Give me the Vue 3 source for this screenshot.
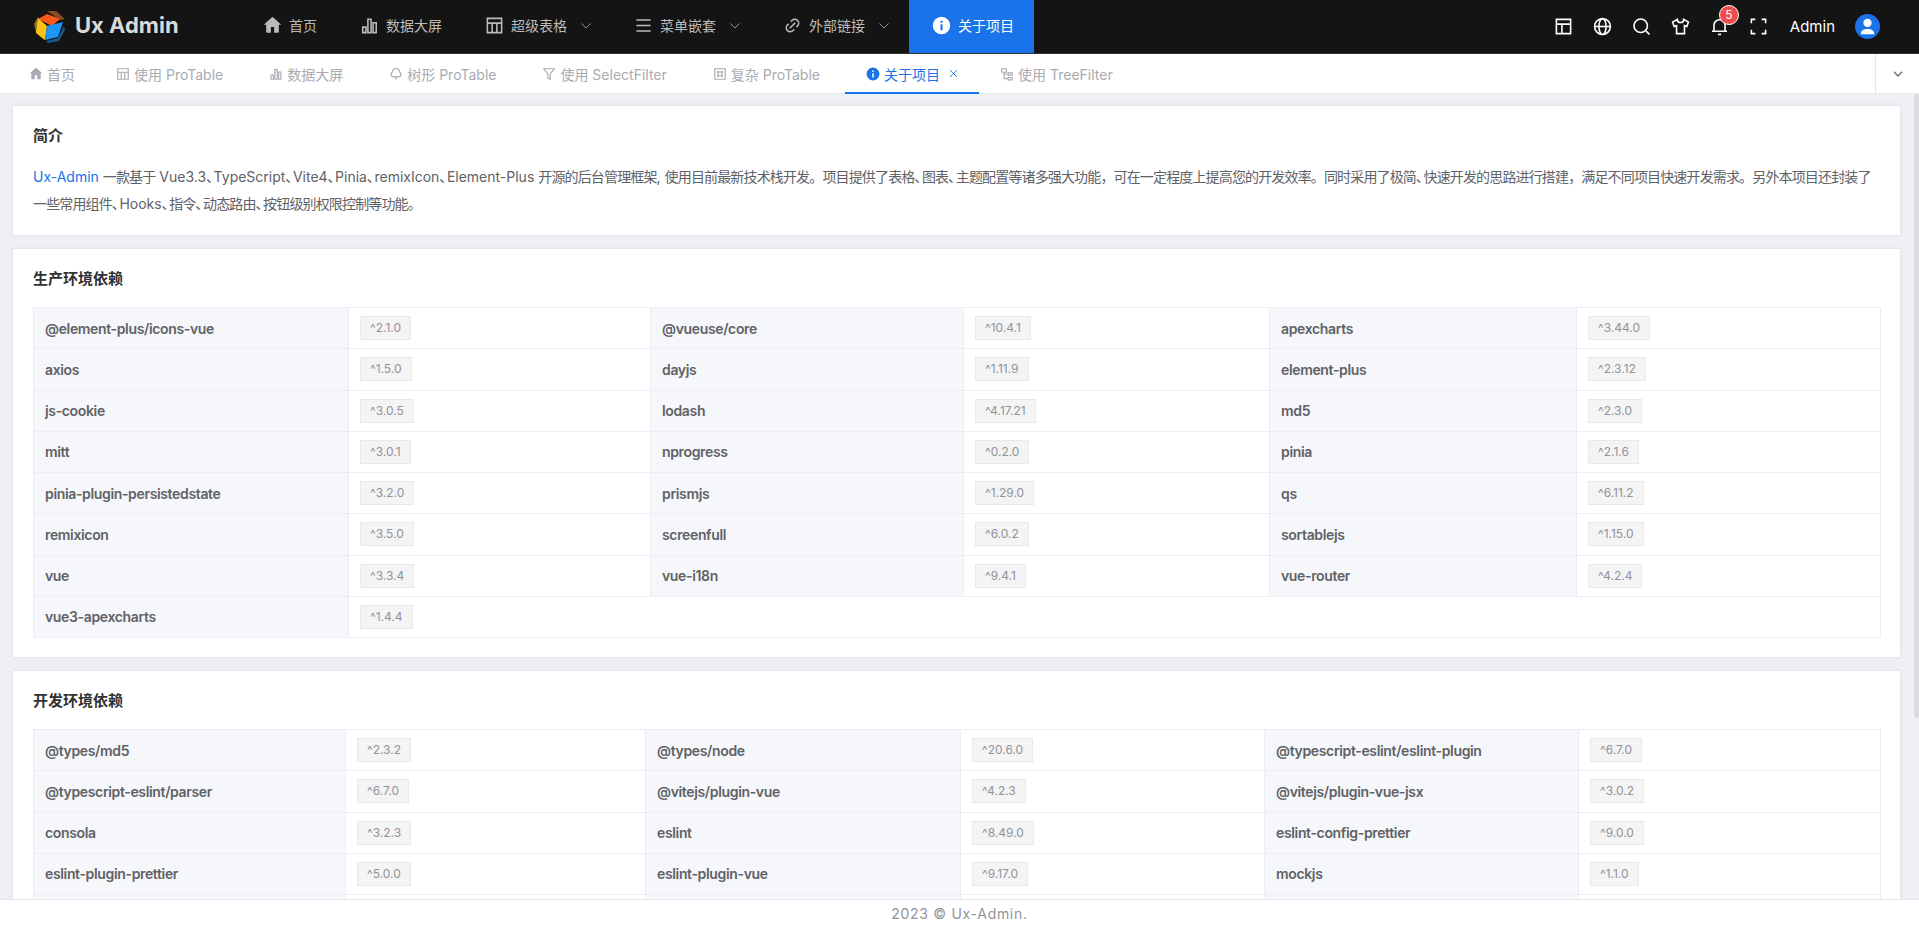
<template>
  <div class="layout">
    <header class="header">
      <div class="logo">
        <svg class="logo-img" viewBox="0 0 32 32">
          <polygon points="14,0 23,0 32,8 27,9" fill="#8a4c22" />
          <polygon points="1,13 5,6 11,29 3,21" fill="#8c7726" />
          <polygon points="13,30 25,27 31,15 32,19 26,30 15,32" fill="#16598f" />
          <polygon points="14,3 27,8 19,15 5,8" fill="#fb5a1c" />
          <polygon points="5,7 14,15 12,29 3,22" fill="#fdc414" />
          <polygon points="14,15 30,11 25,26 12,29" fill="#1b95f6" />
        </svg>
        <span class="logo-text">Ux Admin</span>
      </div>
      <nav class="menu">
        <div v-for="item in menu" :key="item.title" :class="['menu-item', item.active ? 'active' : '']">
          <span class="menu-icon"><svg class="ico" viewBox="0 0 24 24" v-html="icons[item.icon]"></svg></span>
          <span>{{ item.title }}</span>
          <svg v-if="item.sub" class="arrow" viewBox="0 0 10 6"><path d="M.5.5 5 5 9.5.5" fill="none" stroke="currentColor" /></svg>
        </div>
      </nav>
      <div class="tools">
        <span v-for="name in tools" :key="name" class="tool">
          <svg class="ico" viewBox="0 0 24 24" v-html="icons[name]"></svg>
          <b v-if="name === 'bell'" class="badge">5</b>
        </span>
        <span class="username">Admin</span>
        <span class="avatar">
          <svg viewBox="0 0 24 24" fill="#fff"><circle cx="12" cy="8.500" r="4" /><path d="M5.500 19.500c0-3.400 2.500-5 6.500-5s6.500 1.600 6.500 5z" /></svg>
        </span>
      </div>
    </header>

    <div class="tabs">
      <div class="tab-list">
        <div v-for="tab in tabs" :key="tab.title" :class="['tab', tab.active ? 'active' : '', tab.cls]">
          <svg class="tab-icon" viewBox="0 0 24 24" v-html="icons[tab.icon]"></svg>
          <span>{{ tab.title }}</span>
          <svg v-if="tab.active" class="tab-close" viewBox="0 0 10 10"><path d="m1 1 8 8M9 1 1 9" fill="none" stroke="currentColor" /></svg>
        </div>
      </div>
      <div class="tab-more">
        <svg viewBox="0 0 10 6"><path d="M1 .8 5 5 9 .8" fill="none" stroke="#5f6c7b" stroke-width="1.300" /></svg>
      </div>
    </div>

    <div class="body">
      <main class="main">
        <section class="card intro-card">
          <h3 class="card-title">简介</h3>
          <p class="intro"><a class="link">Ux-Admin</a><span v-for="(part, i) in introParts" :key="i" :class="part.cls">{{ part.text }}</span></p>
        </section>

        <section v-for="block in blocks" :key="block.title" class="card">
          <h3 class="card-title">{{ block.title }}</h3>
          <table class="deps">
            <colgroup>
              <col v-for="(w, i) in block.cols" :key="i" :style="{ width: w + 'px' }" />
            </colgroup>
            <tbody>
              <tr v-for="(row, r) in rowsOf(block.items)" :key="r">
                <template v-for="(dep, c) in row" :key="dep[0]">
                  <td class="name">{{ dep[0] }}</td>
                  <td class="ver" :colspan="c === row.length - 1 ? 7 - row.length * 2 : 1"><span class="tag">{{ dep[1] }}</span></td>
                </template>
              </tr>
            </tbody>
          </table>
        </section>
      </main>
      <div class="scrollbar"><div class="thumb"></div></div>
    </div>

    <footer class="footer">2023 © Ux-Admin.</footer>
  </div>
</template>

<script setup>
const line = 'fill="none" stroke="currentColor" stroke-width="2"';

const icons = {
  home: '<path fill-rule="evenodd" d="M20 20a1 1 0 0 1-1 1H5a1 1 0 0 1-1-1v-9H1l10.300-9.400a1 1 0 0 1 1.400 0L23 11h-3zM10 14v7h4v-7z"/>',
  chart: `<path ${line} d="M3.500 14h4v7h-4zM10 4h4v17h-4zM16.500 8.500h4V21h-4z"/>`,
  table: `<path ${line} d="M3 3h18v18H3zM3 9h18M9 9v12M15 9v12"/>`,
  menu: '<path d="M3 4h18v2H3zM3 11h18v2H3zM3 18h18v2H3z"/>',
  link: '<path d="M17.657 14.828l-1.414-1.414L17.657 12A4 4 0 1 0 12 6.343l-1.414 1.414-1.414-1.414 1.414-1.414a6 6 0 0 1 8.485 8.485l-1.414 1.414zm-2.829 2.829l-1.414 1.414a6 6 0 1 1-8.485-8.485l1.414-1.414 1.414 1.414L6.343 12A4 4 0 1 0 12 17.657l1.414-1.414 1.414 1.414zm0-9.900l1.415 1.415-7.071 7.070-1.415-1.414 7.071-7.070z"/>',
  info: '<path fill-rule="evenodd" d="M12 1a11 11 0 1 1 0 22 11 11 0 0 1 0-22zm-1.300 5v2.600h2.600V6zm0 4.500V18h2.600v-7.500z"/>',
  layout: `<path ${line} d="M3 3h18v18H3zM3 9h18M10 9v12"/>`,
  globe: `<g ${line}><circle cx="12" cy="12" r="10"/><ellipse cx="12" cy="12" rx="4.500" ry="10"/><path d="M2 12h20"/></g>`,
  search: `<g ${line}><circle cx="11" cy="11" r="8.500"/><path d="m17.500 17.500 4.500 4.500"/></g>`,
  shirt: `<path ${line} d="M8 3 2 6.500 4 12l3-1v10h10V11l3 1 2-5.500L16 3a4 4 0 0 1-8 0z"/>`,
  bell: `<path ${line} d="M5 18v-7.500a7 7 0 0 1 14 0V18M2.500 18h19"/><path d="M10 21h4v2h-4z"/>`,
  screen: `<path ${line} d="M8 3H3v5M16 3h5v5M8 21H3v-5M16 21h5v-5"/>`,
  tree: `<path ${line} d="M12 2.500a6 6 0 0 0-6 6c-2 1-2.500 2.500-2.500 3.500a5 5 0 0 0 5 5h7a5 5 0 0 0 5-5c0-1-.5-2.500-2.500-3.500a6 6 0 0 0-6-6zM12 17v5"/>`,
  filter: `<path ${line} d="M3 3h18l-7 9v9l-4-2v-7z"/>`,
  complex: `<path ${line} d="M3 3h18v18H3z"/><path d="M7 7h4v4H7zM13 7h4v4h-4zM7 13h4v4H7zM13 13h4v4h-4z"/>`,
  org: `<path ${line} d="M3 3h8v6H3zM14 10h7v4h-7zM14 18h7v4h-7zM7 9v11h7M7 12h7"/>`
};

const menu = [
  { title: '首页', icon: 'home' },
  { title: '数据大屏', icon: 'chart' },
  { title: '超级表格', icon: 'table', sub: true },
  { title: '菜单嵌套', icon: 'menu', sub: true },
  { title: '外部链接', icon: 'link', sub: true },
  { title: '关于项目', icon: 'info', active: true }
];

const tools = ['layout', 'globe', 'search', 'shirt', 'bell', 'screen'];

const tabs = [
  { title: '首页', icon: 'home', cls: 'first' },
  { title: '使用 ProTable', icon: 'table' },
  { title: '数据大屏', icon: 'chart' },
  { title: '树形 ProTable', icon: 'tree' },
  { title: '使用 SelectFilter', icon: 'filter' },
  { title: '复杂 ProTable', icon: 'complex' },
  { title: '关于项目', icon: 'info', active: true },
  { title: '使用 TreeFilter', icon: 'org' }
];

// the CJK runs and the 、 are set tighter than the latin words, | marks the line end
const introText = ' 一款基于 Vue3.3、TypeScript、Vite4、Pinia、remixIcon、Element-Plus 开源的后台管理框架, 使用目前最新技术栈开发。项目提供了表格、图表、主题配置等诸多强大功能，可在一定程度上提高您的开发效率。同时采用了极简、快速开发的思路进行搭建，满足不同项目快速开发需求。另外本项目还封装了|一些常用组件、Hooks、指令、动态路由、按钮级别权限控制等功能。';
const introParts = introText
  .split(/([\u4e00-\u9fff，。]+|、|\|)/)
  .filter((text) => text && text !== '|')
  .map((text) => ({
    text,
    cls: text === '、' ? 'dun' : /[\u4e00-\u9fff]/.test(text) ? 'cjk' : ''
  }));

const blocks = [
  {
    title: '生产环境依赖',
    cols: [315, 302, 313, 306, 307, 304],
    items: [
      ['@element-plus/icons-vue', '^2.1.0'], ['@vueuse/core', '^10.4.1'], ['apexcharts', '^3.44.0'],
      ['axios', '^1.5.0'], ['dayjs', '^1.11.9'], ['element-plus', '^2.3.12'],
      ['js-cookie', '^3.0.5'], ['lodash', '^4.17.21'], ['md5', '^2.3.0'],
      ['mitt', '^3.0.1'], ['nprogress', '^0.2.0'], ['pinia', '^2.1.6'],
      ['pinia-plugin-persistedstate', '^3.2.0'], ['prismjs', '^1.29.0'], ['qs', '^6.11.2'],
      ['remixicon', '^3.5.0'], ['screenfull', '^6.0.2'], ['sortablejs', '^1.15.0'],
      ['vue', '^3.3.4'], ['vue-i18n', '^9.4.1'], ['vue-router', '^4.2.4'],
      ['vue3-apexcharts', '^1.4.4']
    ]
  },
  {
    title: '开发环境依赖',
    cols: [312, 300, 315, 304, 314, 302],
    items: [
      ['@types/md5', '^2.3.2'], ['@types/node', '^20.6.0'], ['@typescript-eslint/eslint-plugin', '^6.7.0'],
      ['@typescript-eslint/parser', '^6.7.0'], ['@vitejs/plugin-vue', '^4.2.3'], ['@vitejs/plugin-vue-jsx', '^3.0.2'],
      ['consola', '^3.2.3'], ['eslint', '^8.49.0'], ['eslint-config-prettier', '^9.0.0'],
      ['eslint-plugin-prettier', '^5.0.0'], ['eslint-plugin-vue', '^9.17.0'], ['mockjs', '^1.1.0'],
      ['postcss', '^8.4.29'], ['prettier', '^3.0.3'], ['sass', '^1.66.1']
    ]
  }
];

const rowsOf = (items) => {
  const rows = [];
  for (let i = 0; i < items.length; i += 3) rows.push(items.slice(i, i + 3));
  return rows;
};
</script>

<style>
html,
body {
  margin: 0;
  height: 100%;
  overflow: hidden;
}
</style>

<style scoped>
.layout {
  display: flex;
  flex-direction: column;
  height: 100vh;
  font-family: Inter, "Noto Sans CJK SC", sans-serif;
  font-size: 14px;
  color: #303133;
  background: #eff0f3;
}

.header {
  display: flex;
  align-items: stretch;
  flex: none;
  height: 53px;
  background: #141414;
  border-bottom: 1px solid #333;
}
.logo {
  display: flex;
  align-items: center;
  gap: 10px;
  box-sizing: border-box;
  width: 240px;
  padding-left: 33px;
}
.logo-img {
  width: 32px;
  height: 32px;
}
.logo-text {
  padding-bottom: 3px;
  font-size: 22px;
  font-weight: 700;
  color: #dadada;
  white-space: nowrap;
}
.menu {
  display: flex;
  flex: 1;
}
.menu-item {
  display: flex;
  align-items: center;
  position: relative;
  padding: 0 20px 3px;
  color: #bbb;
}
.menu-item:has(.arrow) {
  padding-right: 44px;
}
.menu-item.active {
  background: #1a73e8;
  color: #fff;
}
.menu-icon {
  display: flex;
  justify-content: center;
  width: 24px;
  margin-right: 5px;
}
.ico {
  width: 19px;
  height: 19px;
  fill: currentColor;
}
.arrow {
  position: absolute;
  right: 20px;
  top: 23px;
  width: 10px;
  height: 6px;
  color: #909399;
}
.tools {
  display: flex;
  align-items: center;
  padding: 0 39px 1px 0;
  color: #fff;
}
.tool {
  position: relative;
  display: flex;
  justify-content: center;
  width: 39px;
}
.badge {
  position: absolute;
  top: -12px;
  left: 19px;
  width: 20px;
  height: 20px;
  box-sizing: border-box;
  border: 1px solid #fff;
  border-radius: 50%;
  background: #f14b4b;
  font-size: 12px;
  font-weight: 400;
  line-height: 18px;
  text-align: center;
}
.username {
  margin-left: 12px;
  margin-right: 20px;
  font-size: 15px;
}
.avatar {
  display: flex;
  width: 25px;
  height: 25px;
  border-radius: 50%;
  background: #1a73e8;
}

.tabs {
  display: flex;
  flex: none;
  box-sizing: border-box;
  height: 40px;
  background: #fff;
  border-bottom: 1px solid #e4e7ed;
}
.tab-list {
  display: flex;
  flex: 1;
  padding-left: 9px;
}
.tab {
  display: flex;
  align-items: center;
  position: relative;
  height: 39px;
  padding: 0 20px;
  margin-right: 6px;
  color: #a8abb2;
  white-space: nowrap;
}
.tab.first {
  margin-right: 1px;
}
.tab.active {
  margin-right: 1px;
  color: #1a73e8;
}
.tab.active::after {
  content: "";
  position: absolute;
  left: -1px;
  right: 0;
  bottom: -1px;
  height: 2px;
  background: #1a73e8;
}
.tab-icon {
  width: 14px;
  height: 14px;
  margin-right: 4px;
  fill: currentColor;
}
.tab-close {
  width: 9px;
  height: 9px;
  margin-left: 9px;
  margin-right: 1px;
}
.tab-more {
  display: flex;
  align-items: center;
  justify-content: center;
  width: 43px;
  border-left: 1px solid #e4e7ed;
}
.tab-more svg {
  width: 10px;
  height: 6px;
}

.body {
  display: flex;
  flex: 1;
  min-height: 0;
}
.main {
  flex: 1;
  min-width: 0;
  overflow: hidden;
  padding: 11px 12px 0;
}
.scrollbar {
  flex: none;
  box-sizing: border-box;
  width: 6px;
  padding-left: 1px;
}
.thumb {
  height: 624px;
  background: #dadbde;
  border-radius: 3px;
}
.card {
  box-sizing: border-box;
  margin-bottom: 12px;
  padding: 20px 20px 19px;
  background: #fff;
  border: 1px solid #e4e7ed;
  box-shadow: 0 0 6px rgba(0, 0, 0, 0.04);
}
.intro-card {
  padding-bottom: 18px;
}
.card-title {
  margin: 0 0 18px;
  font-size: 15px;
  font-weight: 700;
  line-height: 20px;
  color: #303133;
}
.intro-card .card-title {
  margin-bottom: 17px;
}
.intro {
  margin: 0;
  line-height: 27px;
  color: #606266;
}
.cjk {
  letter-spacing: -0.85px;
}
.dun {
  font-feature-settings: "palt";
  letter-spacing: 0.5px;
}
.link {
  color: #1a73e8;
}

.deps {
  width: 1847px;
  border-collapse: collapse;
  table-layout: fixed;
}
.deps td {
  box-sizing: border-box;
  height: 41.25px;
  padding: 0 11px;
  border: 1px solid #ebeef5;
}
.name {
  background: #f5f7fa;
  font-weight: 600;
  letter-spacing: -0.35px;
  color: #606266;
}
.tag {
  display: inline-block;
  box-sizing: border-box;
  height: 24px;
  padding: 0 9px;
  background: #f4f4f5;
  border: 1px solid #e9e9eb;
  font-size: 12px;
  line-height: 22px;
  color: #909399;
  vertical-align: middle;
}

.footer {
  flex: none;
  box-sizing: border-box;
  height: 29px;
  background: #fff;
  border-top: 1px solid #e4e7ed;
  font-size: 14px;
  line-height: 28px;
  letter-spacing: 0.7px;
  text-align: center;
  color: #909399;
}
</style>
